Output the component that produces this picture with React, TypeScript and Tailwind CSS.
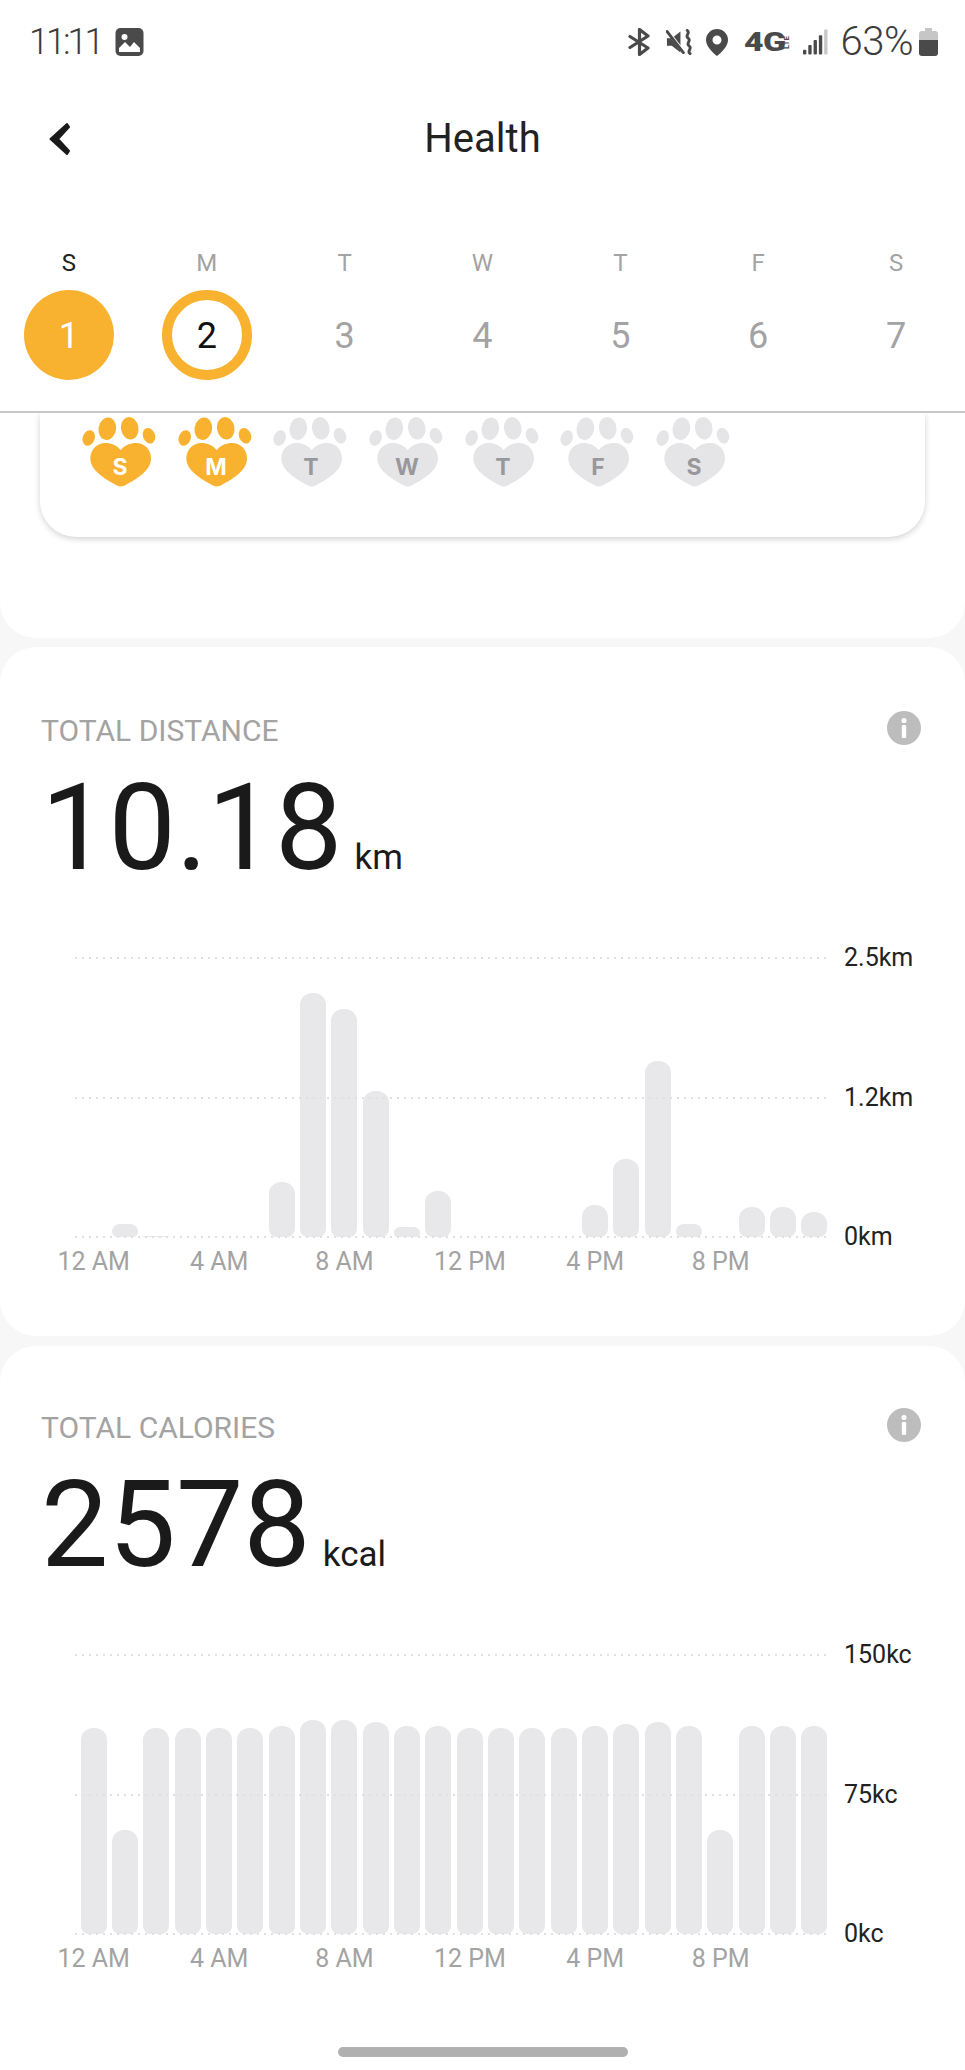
const days = ["S", "M", "T", "W", "T", "F", "S"];

const distanceBars = [0, 13, 1, 0, 0, 0, 55, 244, 228, 146, 10, 46, 0, 0, 0, 0, 32, 78, 176, 13, 0, 30, 30, 25];
const calorieBars = [206, 104, 206, 206, 206, 206, 208, 214, 214, 212, 208, 208, 206, 206, 206, 206, 208, 210, 212, 208, 104, 208, 208, 208];
const hours = ["12 AM", "4 AM", "8 AM", "12 PM", "4 PM", "8 PM"];

function BackIcon() {
  return (
    <svg width="24" height="36" viewBox="0 0 24 36" className="absolute left-[48px]">
      <path
        d="M19 3 2.500 18 19 33l2-3L10 18 21 6z"
        fill="#1a1a1a"
        stroke="#1a1a1a"
        strokeWidth="2"
        strokeLinejoin="round"
      />
    </svg>
  );
}

function ImageIcon() {
  return (
    <svg width="29" height="28" viewBox="0 0 29 28">
      <rect x="0.5" y="0" width="28" height="28" rx="5" fill="#4a4a4a" />
      <circle cx="9.5" cy="9" r="3" fill="#fff" />
      <path d="M4 24v-4l6-6 5 5 4-5 6 6v4z" fill="#fff" />
    </svg>
  );
}

function BluetoothIcon() {
  return (
    <svg width="23" height="28" viewBox="0 0 23 28" fill="none" stroke="#4a4a4a" strokeWidth="3.2" strokeLinejoin="round" strokeLinecap="round">
      <path d="M2 8.500 20 20l-8.500 6.500v-25L20 8 2 19.500" />
    </svg>
  );
}

function MuteIcon() {
  return (
    <svg width="26" height="26" viewBox="0 0 27 26" fill="none">
      <path d="M1 9h5l9-7v22l-9-7H1z" fill="#4a4a4a" />
      <path d="M1 1l17 22" stroke="#fff" strokeWidth="3.500" />
      <path d="M1 2l17 22" stroke="#4a4a4a" strokeWidth="3" strokeLinecap="round" />
      <path d="M22 1c4 3-3 5 1 8s-3 5 1 8-3 5 1 8" stroke="#4a4a4a" strokeWidth="3" strokeLinecap="round" />
    </svg>
  );
}

function PinIcon() {
  return (
    <svg width="22" height="27" viewBox="0 0 22 27">
      <path
        fillRule="evenodd"
        d="M11 0a11 11 0 0 1 11 11c0 6-6 12-11 16C6 23 0 17 0 11A11 11 0 0 1 11 0zm0 6.500a4.500 4.500 0 1 0 0 9 4.500 4.500 0 0 0 0-9z"
        fill="#4a4a4a"
      />
    </svg>
  );
}

function SignalIcon() {
  return (
    <svg width="25" height="26" viewBox="0 0 26 26">
      <rect x="0" y="21" width="3.500" height="5" rx="1" fill="#4a4a4a" />
      <rect x="5.500" y="16" width="3.500" height="10" rx="1" fill="#4a4a4a" />
      <rect x="11" y="11" width="3.500" height="15" rx="1" fill="#4a4a4a" />
      <rect x="16.500" y="6" width="3.500" height="20" rx="1" fill="#4a4a4a" />
      <rect x="22" y="0" width="3.500" height="26" rx="1" fill="#c8c8c8" />
    </svg>
  );
}

function BatteryIcon() {
  return (
    <svg width="19" height="28" viewBox="0 0 19 28">
      <path d="M6 0h7v3h3a3 3 0 0 1 3 3v8H0V6a3 3 0 0 1 3-3h3z" fill="#c6c6c6" />
      <path d="M0 12h19v13a3 3 0 0 1-3 3H3a3 3 0 0 1-3-3z" fill="#4a4a4a" />
    </svg>
  );
}

function InfoIcon() {
  return (
    <svg width="34" height="34" viewBox="0 0 34 34" className="mb-[4px]">
      <circle cx="17" cy="17" r="17" fill="#bdbdbd" />
      <circle cx="17" cy="9.500" r="2.600" fill="#fff" />
      <rect x="14.800" y="14" width="4.400" height="13" rx="1" fill="#fff" />
    </svg>
  );
}

function Paw({ letter, active }: { letter: string; active: boolean }) {
  const fill = active ? "#f8b230" : "#e5e5e7";
  return (
    <svg width="74" height="70" viewBox="0 0 74 70" className="shrink-0">
      <ellipse cx="6.700" cy="21" rx="6" ry="8" transform="rotate(20 6.700 21)" fill={fill} />
      <ellipse cx="25.300" cy="11.700" rx="8.700" ry="11.300" transform="rotate(10 25.300 11.700)" fill={fill} />
      <ellipse cx="47.700" cy="11.300" rx="8.700" ry="11.300" transform="rotate(-10 47.700 11.300)" fill={fill} />
      <ellipse cx="67" cy="18.700" rx="6" ry="8" transform="rotate(-20 67 18.700)" fill={fill} />
      <path
        d="M38.700 33C35 28.500 29 26 23.500 26 14.500 26 8.300 33 8.300 41.500 8.300 54 25 63 33 67.500 37 70 40.500 70 44.500 67.500 53 63 69 54 69 41.500 69 33 63 26 54 26 48 26 42.500 28.500 38.700 33z"
        fill={fill}
      />
      <text
        x="38"
        y="58"
        textAnchor="middle"
        fontSize="23"
        fontWeight="700"
        fontFamily="Inter, Roboto, sans-serif"
        fill={active ? "#fff" : "#98989c"}
      >
        {letter}
      </text>
    </svg>
  );
}

function Chart({ bars, ticks }: { bars: number[]; ticks: string[] }) {
  return (
    <div>
      <div className="grid pl-[75px]">
        <div className="col-start-1 row-start-1 flex h-[289px] items-end gap-[5.35px] pl-[5.5px]">
          {bars.map((h, i) => (
            <div
              key={i}
              className="w-[26px] shrink-0 rounded-t-[12px] rounded-b-[8px] bg-[#e8e8ea]"
              style={{ height: h, opacity: h === 0 ? 0 : 1 }}
            />
          ))}
        </div>
        <div className="col-start-1 row-start-1 flex h-[299px] flex-col justify-between">
          {ticks.map((tick) => (
            <div key={tick} className="flex h-[20px] items-center">
              <div className="h-[2px] w-[755px] bg-[repeating-linear-gradient(90deg,#e0e0e0_0,#e0e0e0_2px,transparent_2px,transparent_7px)]" />
              <span className="ml-[14px] text-[25px] leading-[20px] text-[#222222]">{tick}</span>
            </div>
          ))}
        </div>
      </div>
      <div className="flex pl-[31px]">
        {hours.map((label) => (
          <span key={label} className="w-[125.4px] shrink-0 text-center text-[25px] leading-[30px] text-[#a3a3a3]">
            {label}
          </span>
        ))}
      </div>
    </div>
  );
}

function Metric({
  title,
  value,
  unit,
  bars,
  ticks,
  className,
}: {
  title: string;
  value: string;
  unit: string;
  bars: number[];
  ticks: string[];
  className: string;
}) {
  return (
    <section className={className}>
      <div className="flex h-[40px] items-center justify-between pl-[41px] pr-[44px]">
        <span className="mt-[2px] text-[30px] leading-[40px] text-[#a3a3a3]">{title}</span>
        <InfoIcon />
      </div>
      <div className="mt-[18px] flex items-baseline pl-[41px]">
        <span className="text-[120px] leading-[120px] text-[#1a1a1a]">{value}</span>
        <span className="ml-[12px] text-[35px] text-[#1a1a1a]">{unit}</span>
      </div>
      <div className="mt-[60px]">
        <Chart bars={bars} ticks={ticks} />
      </div>
    </section>
  );
}

export default function App() {
  return (
    <div className="relative h-[2070px] w-[965px] overflow-hidden bg-[#f7f7f7] font-['Roboto',sans-serif]">
      <header className="relative z-10 h-[413px] border-b-2 border-[#c8c8c8] bg-white">
        <div className="flex h-[84px] items-center justify-between pl-[29px] pr-[27px]">
          <div className="flex items-center gap-[14px]">
            <span className="text-[36px] font-light tracking-[-3px] text-[#3c3c3c]">11:11</span>
            <ImageIcon />
          </div>
          <div className="flex items-center">
            <BluetoothIcon />
            <div className="ml-[15px]">
              <MuteIcon />
            </div>
            <div className="ml-[14px]">
              <PinIcon />
            </div>
            <div className="ml-[16px] flex w-[47px] items-center justify-between">
              <span className="w-[38px] origin-left scale-x-[1.35] text-[25px] leading-none font-black tracking-[-0.5px] text-[#4a4a4a]">4G</span>
              <span className="w-[8px] rotate-180 text-[8px] leading-[8px] font-bold text-[#4a4a4a] [writing-mode:vertical-rl]">LTE</span>
            </div>
            <div className="ml-[12px]">
              <SignalIcon />
            </div>
            <span className="ml-[13px] text-[40px] leading-none font-light tracking-[-0.5px] text-[#3c3c3c]">63%</span>
            <div className="ml-[6px]">
              <BatteryIcon />
            </div>
          </div>
        </div>
        <div className="relative flex h-[110px] items-center justify-center">
          <BackIcon />
          <h1 className="text-[40px] font-normal text-[#222222]">Health</h1>
        </div>
        <div className="mt-[54px] grid grid-cols-7 justify-items-center">
          {days.map((day, i) => (
            <span key={i} className={`text-[24px] leading-[30px] ${i === 0 ? "text-[#222222]" : "text-[#a3a3a3]"}`}>
              {day}
            </span>
          ))}
          {days.map((_, i) => (
            <div key={i} className="mt-[12px] flex h-[90px] w-[90px] items-center justify-center">
              {i === 0 && (
                <span className="flex h-[90px] w-[90px] items-center justify-center rounded-full bg-[#f8b230] pt-[2px] text-[36px] text-white">
                  1
                </span>
              )}
              {i === 1 && (
                <span className="flex h-[90px] w-[90px] items-center justify-center rounded-full border-[10px] border-[#f8b230] bg-white pt-[2px] text-[36px] text-[#111111]">
                  2
                </span>
              )}
              {i > 1 && <span className="pt-[2px] text-[36px] text-[#a3a3a3]">{i + 1}</span>}
            </div>
          ))}
        </div>
      </header>

      <section className="h-[225px] rounded-b-[36px] bg-white px-[40px]">
        <div className="flex h-[124px] gap-[21.7px] rounded-b-[36px] bg-white pl-[42px] pt-[4px] shadow-[0_2px_6px_rgba(0,0,0,0.18)]">
          {days.map((day, i) => (
            <Paw key={i} letter={day} active={i < 2} />
          ))}
        </div>
      </section>

      <Metric
        title="TOTAL DISTANCE"
        value="10.18"
        unit="km"
        bars={distanceBars}
        ticks={["2.5km", "1.2km", "0km"]}
        className="mt-[9px] h-[689px] rounded-[36px] bg-white pt-[63px]"
      />

      <Metric
        title="TOTAL CALORIES"
        value="2578"
        unit="kcal"
        bars={calorieBars}
        ticks={["150kc", "75kc", "0kc"]}
        className="mt-[10px] h-[724px] rounded-t-[36px] bg-white pt-[61px]"
      />

      <div className="absolute bottom-[13px] left-[338px] h-[10px] w-[290px] rounded-full bg-[#b0b0b0]" />
    </div>
  );
}
